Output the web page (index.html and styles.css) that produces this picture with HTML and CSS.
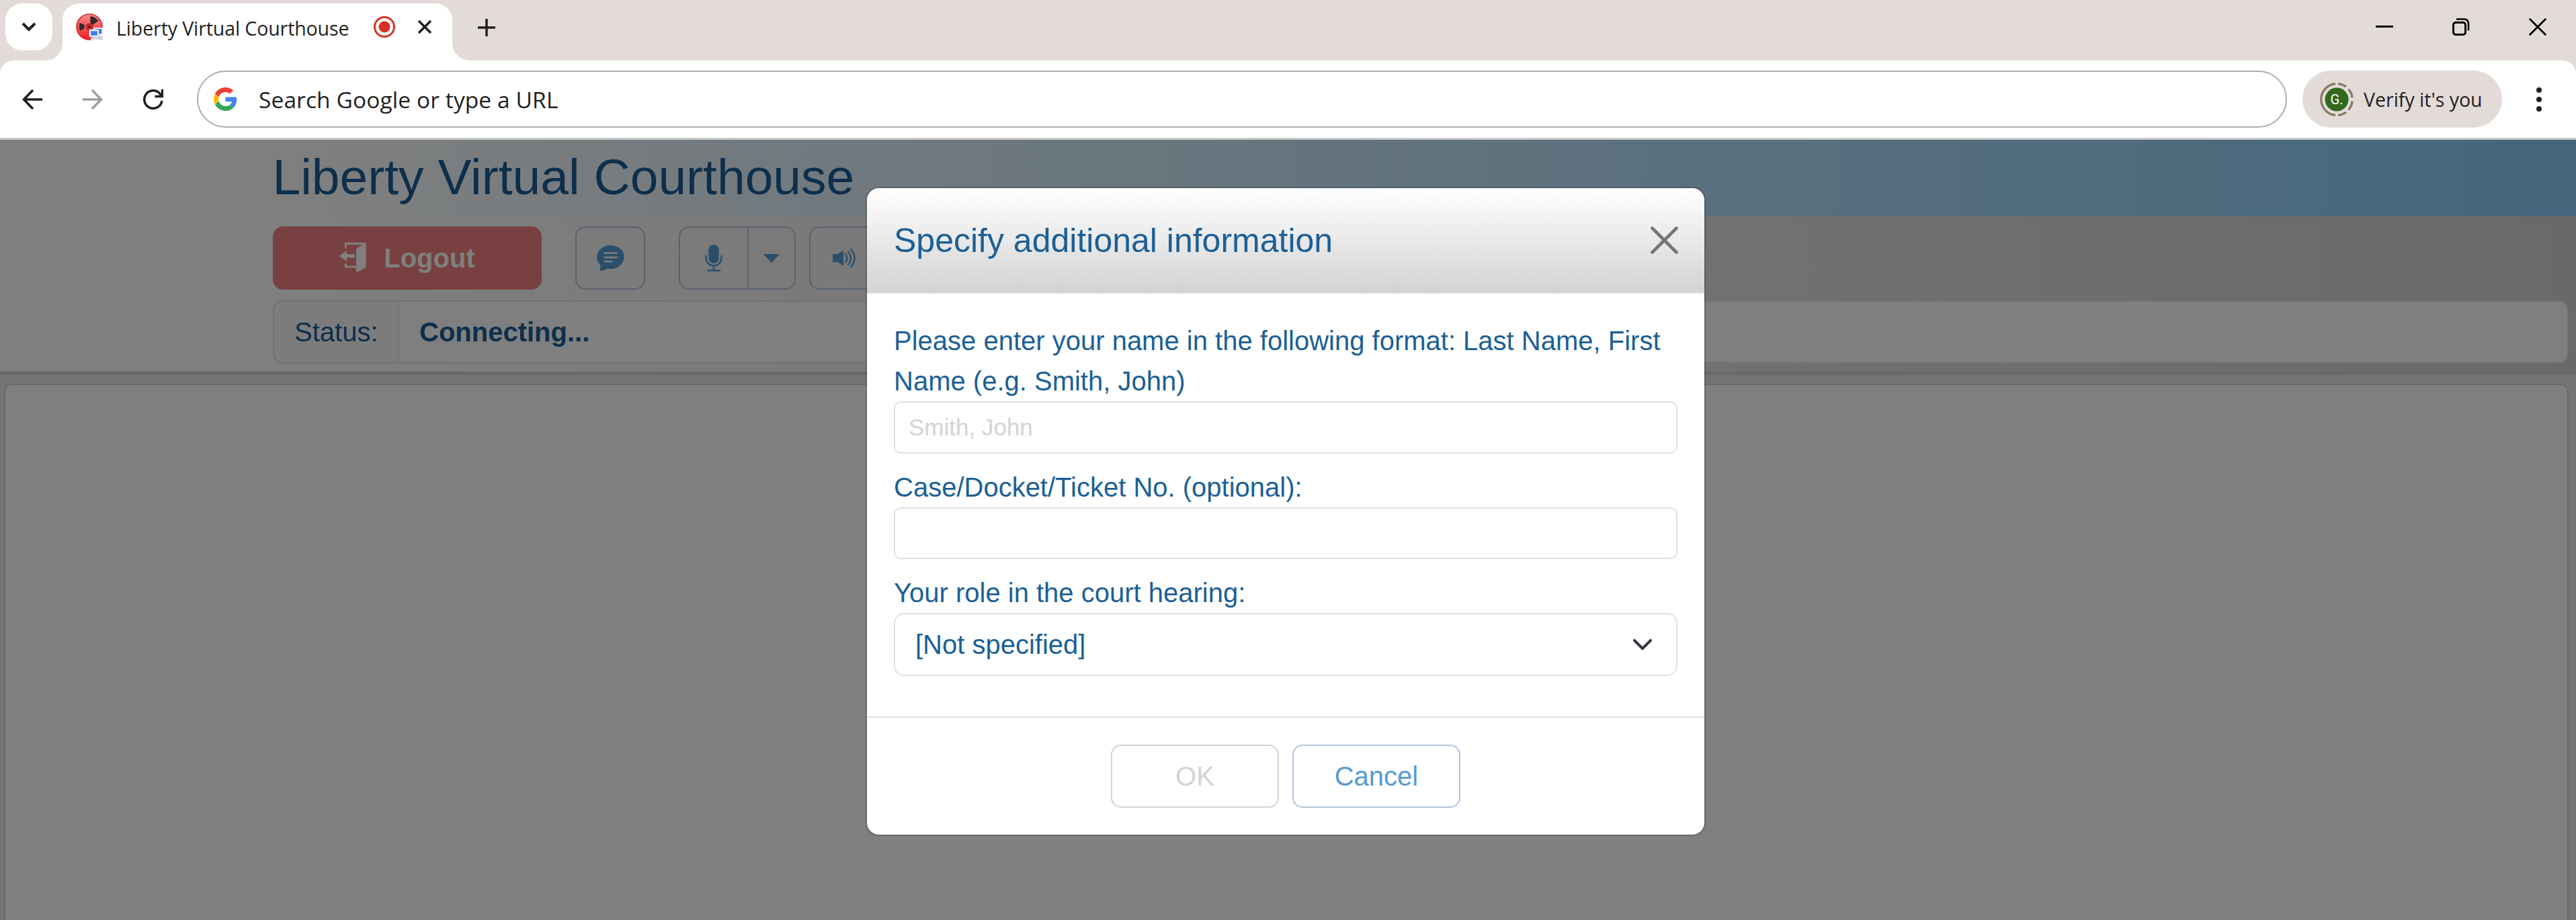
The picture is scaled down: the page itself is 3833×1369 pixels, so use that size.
FILE: index.html
```html
<!DOCTYPE html>
<html lang="en">
<head>
    <meta charset="UTF-8">
    <meta name="viewport" content="width=device-width, initial-scale=1.0">
    <title>Liberty Virtual Courthouse</title>
    <link rel="stylesheet" href="styles.css">
</head>
<body>

<!-- Browser tab strip -->
<div class="tab-strip">
    <div class="tab-search">
        <svg width="70" height="70" viewBox="0 0 70 70"><path d="M26 30l9 9 9-9" fill="none" stroke="#1f1f1f" stroke-width="4"/></svg>
    </div>
    <div class="tab">
        <svg class="favicon" width="40" height="40" viewBox="0 0 40 40">
            <defs>
                <linearGradient id="disc" x1="0" y1="0" x2="0" y2="1">
                    <stop offset="0" stop-color="#ff8a8a"/>
                    <stop offset="1" stop-color="#f51c22"/>
                </linearGradient>
            </defs>
            <circle cx="20" cy="20" r="19" fill="url(#disc)" stroke="#c8282c" stroke-width="1.600"/>
            <path d="M21.500 4q7 .500 12 7L25 17l-3.500-2zM5.500 14l7.500 3-1 6-6 3q-2-6-.500-12z" fill="#2f2b2b"/>
            <circle cx="20" cy="20" r="4.500" fill="#e02a2e" stroke="#a31a1e" stroke-width="1.500"/>
            <circle cx="20" cy="20" r="1.800" fill="#3a0a0a"/>
            <rect x="27" y="22" width="12" height="9" fill="#3a78e0" stroke="#dfe7f2" stroke-width="2"/>
            <path d="M31 34h9v5H23v-3" fill="#c9c9cf"/>
            <rect x="21" y="25" width="12" height="9" fill="#3a7be8" stroke="#e8eef7" stroke-width="2.500"/>
            <path d="M22 38.500h11" stroke="#e8e8ec" stroke-width="2.500"/>
        </svg>
        <span class="tab-title">Liberty Virtual Courthouse</span>
        <svg class="tab-rec" width="34" height="34" viewBox="0 0 34 34"><circle cx="17" cy="17" r="14.500" fill="none" stroke="#d93025" stroke-width="3"/><circle cx="17" cy="17" r="8.500" fill="#d93025"/></svg>
        <svg class="tab-close" width="22" height="22" viewBox="0 0 22 22"><path d="M2 2l18 18M20 2L2 20" stroke="#1f1f1f" stroke-width="3.500"/></svg>
    </div>
    <svg class="new-tab" width="26" height="26" viewBox="0 0 26 26"><path d="M13 0v26M0 13h26" stroke="#1f1f1f" stroke-width="3.500"/></svg>
    <div class="window-controls">
        <svg width="26" height="26" viewBox="0 0 26 26"><path d="M0 12.500h26" stroke="#000" stroke-width="3"/></svg>
        <svg width="26" height="26" viewBox="0 0 26 26"><rect x="1.500" y="6.500" width="18" height="18" rx="3.500" fill="none" stroke="#000" stroke-width="3"/><path d="M6 1.500h11q7 0 7 7v10" fill="none" stroke="#000" stroke-width="2.600"/></svg>
        <svg width="26" height="26" viewBox="0 0 26 26"><path d="M.800.800l24.400 24.400M25.200.800L.800 25.200" stroke="#000" stroke-width="2.800"/></svg>
    </div>
</div>

<!-- Browser toolbar -->
<div class="toolbar-bg">
<div class="toolbar">
    <svg class="nav-icon" width="30" height="30" viewBox="0 0 30 30"><path d="M16 1L2.500 15 16 29M2 15h28" fill="none" stroke="#1f1f1f" stroke-width="3.500"/></svg>
    <svg class="nav-icon" width="30" height="30" viewBox="0 0 30 30"><path d="M14 1l13.500 14L14 29M28 15H0" fill="none" stroke="#9e9e9e" stroke-width="3.500"/></svg>
    <svg class="nav-icon" width="30" height="30" viewBox="0 0 30 30"><path d="M28 17A13.200 13.200 0 1 1 25 6.500l2.500 3" fill="none" stroke="#1f1f1f" stroke-width="3.500"/><path d="M28.500 0v10.500H17.500" fill="none" stroke="#1f1f1f" stroke-width="3.500"/></svg>
    <div class="address-bar">
        <svg class="google" width="35" height="35" viewBox="0 0 48 48">
            <path fill="#EA4335" d="M24 9.500c3.540 0 6.710 1.220 9.210 3.600l6.850-6.850C35.900 2.380 30.470 0 24 0 14.620 0 6.510 5.380 2.560 13.220l7.980 6.190C12.430 13.720 17.740 9.500 24 9.500z"/>
            <path fill="#4285F4" d="M46.980 24.550c0-1.570-.150-3.090-.380-4.550H24v9.020h12.940c-.580 2.960-2.260 5.480-4.780 7.180l7.730 6c4.510-4.180 7.090-10.360 7.090-17.650z"/>
            <path fill="#FBBC05" d="M10.530 28.590c-.480-1.450-.760-2.990-.760-4.590s.270-3.140.760-4.590l-7.980-6.190C.920 16.460 0 20.120 0 24c0 3.880.920 7.540 2.560 10.780l7.970-6.190z"/>
            <path fill="#34A853" d="M24 48c6.480 0 11.930-2.130 15.890-5.810l-7.730-6c-2.150 1.450-4.920 2.300-8.160 2.300-6.260 0-11.570-4.220-13.470-9.910l-7.980 6.190C6.510 42.620 14.620 48 24 48z"/>
        </svg>
        <span>Search Google or type a URL</span>
    </div>
    <div class="profile-chip">
        <svg width="50" height="50" viewBox="0 0 50 50">
            <path d="M23 1.700a23.400 23.400 0 0 0 0 46.600" fill="none" stroke="#857c62" stroke-width="3.300"/>
            <path d="M27 1.700a23.400 23.400 0 0 1 12 4.300M42.500 9.500a23.400 23.400 0 0 1 5.600 13M48.100 27.500a23.400 23.400 0 0 1-5.600 13M39 44a23.400 23.400 0 0 1-12 4.300" fill="none" stroke="#857c62" stroke-width="3.300"/>
            <circle cx="25" cy="25" r="17.500" fill="#33691e"/>
            <text class="avatar-letter" x="25" y="32" text-anchor="middle">G.</text>
        </svg>
        <span>Verify it's you</span>
    </div>
    <svg class="menu-dots" width="8" height="36" viewBox="0 0 8 36"><circle cx="4" cy="4" r="4" fill="#1f1f1f"/><circle cx="4" cy="18" r="4" fill="#1f1f1f"/><circle cx="4" cy="32" r="4" fill="#1f1f1f"/></svg>
</div>
</div>

<!-- Application -->
<div class="app">
    <header class="app-title">Liberty Virtual Courthouse</header>
    <div class="controls">
        <div class="button-row">
            <button class="logout-btn">
                <svg width="40" height="46" viewBox="0 0 40 46"><path d="M9.300 8.500V1.500H38M9.300 31v5H26" fill="none" stroke="#fff" stroke-width="2.800"/><path d="M39.500 0v37L25 45V9zM0 20l11-8.500V17h11.700v5.500H11V28z" fill="#fff"/></svg>
                Logout
            </button>
            <button class="icon-btn chat-btn">
                <svg width="41" height="39" viewBox="0 0 41 39"><ellipse cx="20.400" cy="17.600" rx="20.400" ry="17.600" fill="#569fd5"/><path d="M4 25q3 6 0 13 7 0 14-4z" fill="#569fd5"/><path d="M11.500 11.500h18.500M11.500 18h18.500M11.500 24h11" stroke="#fff" stroke-width="2.300" stroke-linecap="round"/></svg>
            </button>
            <div class="btn-group">
                <button class="icon-btn mic-btn">
                    <svg width="26" height="40" viewBox="0 0 26 40"><rect x="5.300" y="0" width="15.400" height="28" rx="7.700" fill="#569fd5"/><path d="M1.500 17v3a11.500 11.500 0 0 0 23 0v-3M13 31v8M4 38.500h18" fill="none" stroke="#569fd5" stroke-width="2.600" stroke-linecap="round"/></svg>
                </button>
                <button class="icon-btn caret-btn">
                    <svg width="24" height="13" viewBox="0 0 24 13"><path d="M0 0h24L12 13z" fill="#569fd5"/></svg>
                </button>
            </div>
            <button class="icon-btn speaker-btn">
                <svg width="34" height="30" viewBox="0 0 34 30"><path d="M0 9h7l9-5.500v23L7 21H0z" fill="#569fd5"/><path d="M18.500 8q6 7 0 14M22.500 4.500q9 10.500 0 21M26.500 1q12 14 0 28" fill="none" stroke="#569fd5" stroke-width="2.500"/></svg>
            </button>
        </div>
        <div class="status-bar">
            <span class="status-label">Status:</span>
            <span class="status-value">Connecting...</span>
        </div>
    </div>
    <main class="content">
        <div class="video-panel"></div>
    </main>

    <!-- Modal -->
    <div class="backdrop">
        <div class="modal">
            <div class="modal-header">
                <h2>Specify additional information</h2>
                <svg width="41" height="41" viewBox="0 0 41 41"><path d="M2.500 2.500l36 36M38.500 2.500l-36 36" stroke="#757575" stroke-width="4.600" stroke-linecap="round"/></svg>
            </div>
            <div class="modal-body">
                <label for="userName">Please enter your name in the following format: Last Name, First Name (e.g. Smith, John)</label>
                <input type="text" id="userName" placeholder="Smith, John">
                <label for="caseNo">Case/Docket/Ticket No. (optional):</label>
                <input type="text" id="caseNo">
                <label>Your role in the court hearing:</label>
                <div class="role-select">
                    <span>[Not specified]</span>
                    <svg width="28" height="17" viewBox="0 0 28 17"><path d="M2 2l12 12L26 2" fill="none" stroke="#343a40" stroke-width="4" stroke-linecap="round" stroke-linejoin="round"/></svg>
                </div>
            </div>
            <div class="modal-footer">
                <button class="ok-btn" disabled>OK</button>
                <button class="cancel-btn">Cancel</button>
            </div>
        </div>
    </div>
</div>

</body>
</html>
```

FILE: styles.css
```css
* {
    box-sizing: border-box;
}
body {
    margin: 0;
    height: 1369px;
    overflow: hidden;
    display: flex;
    flex-direction: column;
    font-family: "Liberation Sans", Arial, sans-serif;
    font-size: 40px;
    line-height: 60px;
    color: #1c5f96;
    background: #fff;
}
svg {
    display: block;
    flex: none;
}
button {
    font: inherit;
    padding: 0;
    background: none;
}
/* Tab strip */
.tab-strip {
    display: flex;
    align-items: center;
    height: 90px;
    flex: none;
    background: #e3dbd8;
    padding: 0 44px 0 8px;
    font-family: "Open Sans", "Noto Sans", sans-serif;
}
.tab-search {
    width: 70px;
    height: 70px;
    margin-bottom: 10px;
    border-radius: 25px;
    background: #fff;
}
.tab {
    position: relative;
    display: flex;
    align-items: center;
    width: 580px;
    height: 85px;
    margin: 5px 0 0 15px;
    padding: 0 30px 15px 20px;
    background: #fff;
    border-radius: 25px 25px 0 0;
}
.tab::before, .tab::after {
    content: "";
    position: absolute;
    bottom: 0;
    width: 25px;
    height: 25px;
}
.tab::before {
    left: -25px;
    background: radial-gradient(circle at 0 0, transparent 24.5px, #fff 25px);
}
.tab::after {
    right: -25px;
    background: radial-gradient(circle at 100% 0, transparent 24.5px, #fff 25px);
}
.tab-title {
    width: 383px;
    margin-left: 20px;
    padding-top: 4px;
    font-size: 28.5px;
    letter-spacing: -0.1px;
    color: #1f1f1f;
    white-space: nowrap;
}
.tab-close {
    margin-left: 32px;
}
.new-tab {
    margin: 0 0 9px 38px;
}
.window-controls {
    display: flex;
    gap: 88px;
    margin: 0 0 11px auto;
}
/* Toolbar */
.toolbar-bg {
    flex: none;
    height: 118px;
    background: #e3dbd8;
    border-bottom: 3px solid #c9cbca;
}
.toolbar {
    display: flex;
    align-items: center;
    height: 115px;
    padding: 0 51px 0 33px;
    background: #fff;
    border-radius: 20px 20px 0 0;
    font-family: "Open Sans", "Noto Sans", sans-serif;
    color: #1f1f1f;
}
.nav-icon {
    margin-right: 60px;
}
.address-bar {
    flex: 1;
    display: flex;
    align-items: center;
    height: 85px;
    margin-left: -10px;
    padding-left: 23px;
    border: 2px solid #adadad;
    border-radius: 43px;
    font-size: 33.5px;
    letter-spacing: 0.1px;
}
.google {
    margin-right: 32px;
}
.profile-chip {
    display: flex;
    align-items: center;
    gap: 15px;
    width: 297px;
    height: 85px;
    margin: 0 51px 0 23px;
    padding-left: 26px;
    border-radius: 43px;
    background: #e3dbd8;
    font-size: 28.5px;
    white-space: nowrap;
}
.avatar-letter {
    font-family: Roboto, sans-serif;
    font-size: 20px;
    fill: #fff;
}
/* Application */
.app {
    position: relative;
    flex: 1;
    display: flex;
    flex-direction: column;
}
.app-title {
    height: 114px;
    padding-left: 405.5px;
    font-size: 75px;
    line-height: 111px;
    background: linear-gradient(to right, #fff 406px, #87cefa);
}
.controls {
    height: 236px;
    padding: 15px 11px 0 406px;
    background: linear-gradient(to right, #fff 406px, #d3d3d3);
    border-bottom: 5px solid #d3d3d3;
}
.button-row {
    display: flex;
    height: 94px;
    margin-bottom: 16px;
}
.logout-btn {
    display: flex;
    align-items: center;
    justify-content: center;
    gap: 26px;
    width: 400px;
    border: none;
    border-radius: 15px;
    background: #f08080;
    color: #fff;
    font-weight: bold;
}
.icon-btn {
    display: flex;
    align-items: center;
    justify-content: center;
    border: 2px solid #b0c4de;
    border-radius: 15px;
}
.chat-btn {
    width: 104px;
    margin-left: 50px;
}
.btn-group {
    display: flex;
    margin: 0 20px 0 50px;
}
.mic-btn {
    width: 104px;
    border-radius: 15px 0 0 15px;
}
.caret-btn {
    width: 72px;
    margin-left: -2px;
    border-radius: 0 15px 15px 0;
}
.speaker-btn {
    width: 104px;
}
.status-bar {
    display: flex;
    height: 94px;
    border: 2px solid #dee2e6;
    border-radius: 15px;
    background: #fff;
    line-height: 90px;
    overflow: hidden;
}
.status-label {
    width: 186px;
    padding-left: 30px;
    background: #f8f9fa;
    border-right: 2px solid #dee2e6;
}
.status-value {
    padding-left: 30px;
    font-weight: bold;
}
.content {
    flex: 1;
    display: flex;
    padding: 13px 11px 0 6px;
    background: #e9e9e9;
}
.video-panel {
    flex: 1;
    border: 2px solid #d3d3d3;
    border-bottom: none;
    border-radius: 12px 12px 0 0;
    background: #fff;
}
/* Modal */
.backdrop {
    position: absolute;
    inset: 0;
    display: flex;
    align-items: flex-start;
    padding: 70px 0 0 1288px;
    background: rgba(0, 0, 0, 0.5);
}
.modal {
    width: 1250px;
    border: 2px solid rgba(0, 0, 0, 0.175);
    border-radius: 20px;
    background: #fff;
    background-clip: padding-box;
}
.modal-header {
    display: flex;
    align-items: center;
    justify-content: space-between;
    height: 157px;
    padding: 0 39px 0 40px;
    border-bottom: 2px solid #dee2e6;
    border-radius: 18px 18px 0 0;
    background: linear-gradient(#fff, #d3d3d3);
}
.modal-header h2 {
    margin: 0;
    font-size: 50px;
    font-weight: normal;
}
.modal-body {
    display: flex;
    flex-direction: column;
    height: 629px;
    padding: 40px;
}
.modal-body input {
    height: 77.5px;
    margin: 0 0 20px;
    padding: 0 20px;
    border: 2px solid #dee2e6;
    border-radius: 10px;
    font: 35px "Liberation Sans", Arial, sans-serif;
    color: #1c5f96;
}
.modal-body input::placeholder {
    color: #d3d3d3;
}
.role-select {
    display: flex;
    align-items: center;
    justify-content: space-between;
    height: 94px;
    padding: 0 36px 0 30px;
    border: 2px solid #dee2e6;
    border-radius: 15px;
}
.modal-footer {
    display: flex;
    justify-content: center;
    gap: 20px;
    height: 176px;
    padding-top: 40px;
    border-top: 2px solid #dee2e6;
}
.ok-btn, .cancel-btn {
    width: 250px;
    height: 94px;
    border: 2px solid #d3d3d3;
    border-radius: 15px;
    color: #d3d3d3;
}
.cancel-btn {
    border-color: #b0c4de;
    color: #569bd0;
}
```
